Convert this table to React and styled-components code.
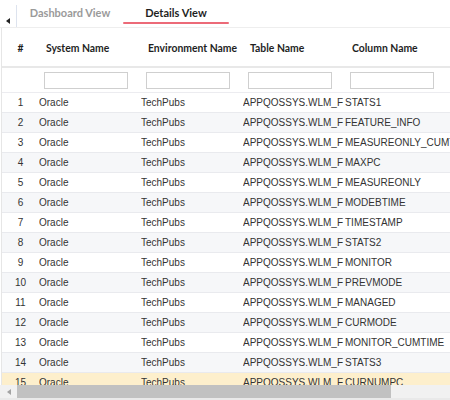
import React from 'react';
import styled, { createGlobalStyle } from 'styled-components';

const GlobalStyle = createGlobalStyle`
  html, body {
    margin: 0;
    padding: 0;
    background: #fff;
  }
`;

const Page = styled.div`
  width: 450px;
  height: 400px;
  overflow: hidden;
  display: flex;
  flex-direction: column;
  background: #fff;
`;

const TabBar = styled.div`
  height: 28px;
  display: flex;
  align-items: stretch;
  border-bottom: 1px solid #eeeeee;
  box-sizing: border-box;
  flex-shrink: 0;
`;

const Collapse = styled.div`
  width: 17px;
  display: flex;
  align-items: center;
  justify-content: center;
  padding-top: 10px;
  box-sizing: border-box;
  border-right: 1px solid #dde3ee;
  margin-top: 5px;
`;

const Tab = styled.div`
  position: relative;
  display: flex;
  align-items: center;
  justify-content: center;
  width: ${(p) => p.$width}px;
  margin-left: ${(p) => p.$ml}px;
  font-family: 'Lato', 'Liberation Sans', sans-serif;
  font-weight: 700;
  font-size: 11px;
  color: ${(p) => (p.$active ? '#1f1f1f' : '#9a9a9a')};
  padding-bottom: 3px;
  box-sizing: border-box;

  &::after {
    content: '';
    display: ${(p) => (p.$active ? 'block' : 'none')};
    position: absolute;
    left: 0;
    right: 0;
    bottom: 3px;
    height: 2px;
    background: #ec6a78;
    border-radius: 1px;
  }
`;

const TableArea = styled.div`
  flex: 1;
  overflow: hidden;
  display: flex;
  flex-direction: column;
  margin-left: 1px;
  border-left: 1px solid #e6e6e6;
`;

const cols = '37px 102px 102px 102px 160px';

const HeadRow = styled.div`
  display: grid;
  grid-template-columns: ${cols};
  height: 40px;
  align-items: center;
  border-bottom: 2px solid #e8e8e8;
  box-sizing: border-box;
  flex-shrink: 0;
`;

const HeadCell = styled.div`
  font-family: 'Lato', 'Liberation Sans', sans-serif;
  font-weight: 700;
  font-size: 10.4px;
  color: #1f1f1f;
  padding-left: ${(p) => (p.$center ? 0 : 7)}px;
  text-align: ${(p) => (p.$center ? 'center' : 'left')};
  white-space: nowrap;
  padding-top: 1px;
`;

const FilterRow = styled.div`
  display: grid;
  grid-template-columns: ${cols};
  height: 25px;
  align-items: center;
  border-bottom: 1px solid #ececf0;
  box-sizing: border-box;
  flex-shrink: 0;
`;

const FilterInput = styled.input`
  width: 84px;
  height: 17px;
  margin-left: 5px;
  border: 1px solid #cfcfcf;
  box-sizing: border-box;
  padding: 0 3px;
  font-size: 10px;
  outline: none;
`;

const Row = styled.div`
  display: grid;
  grid-template-columns: ${cols};
  height: 20px;
  align-items: center;
  border-bottom: 1px solid #e9eaee;
  box-sizing: border-box;
  flex-shrink: 0;
  background: ${(p) => (p.$highlight ? '#fdefcc' : p.$alt ? '#f6f7f9' : '#ffffff')};
`;

const Cell = styled.div`
  font-family: 'Liberation Sans', Arial, sans-serif;
  font-size: 10px;
  color: #333;
  white-space: nowrap;
  overflow: hidden;
  text-align: ${(p) => (p.$center ? 'center' : 'left')};
  padding-left: 0;
`;

const ScrollBar = styled.div`
  height: 13px;
  display: flex;
  align-items: stretch;
  background: #f1f1f1;
  flex-shrink: 0;
  border-bottom: 2px solid #e9e9e9;
`;

const ScrollArrow = styled.div`
  width: 17px;
  display: flex;
  align-items: center;
  justify-content: center;
`;

const ScrollThumb = styled.div`
  width: 374px;
  background: #c1c1c1;
`;

const columns = [
  'STATS1',
  'FEATURE_INFO',
  'MEASUREONLY_CUMTIME',
  'MAXPC',
  'MEASUREONLY',
  'MODEBTIME',
  'TIMESTAMP',
  'STATS2',
  'MONITOR',
  'PREVMODE',
  'MANAGED',
  'CURMODE',
  'MONITOR_CUMTIME',
  'STATS3',
  'CURNUMPC',
];

export default function App() {
  return (
    <Page>
      <GlobalStyle />
      <TabBar>
        <Collapse>
          <svg width="4" height="6" viewBox="0 0 4 6">
            <path d="M4 0 L0 3 L4 6 Z" fill="#222" />
          </svg>
        </Collapse>
        <Tab $width={92} $ml={7}>Dashboard View</Tab>
        <Tab $width={106} $ml={7} $active>Details View</Tab>
      </TabBar>
      <TableArea>
        <HeadRow>
          <HeadCell $center>#</HeadCell>
          <HeadCell>System Name</HeadCell>
          <HeadCell>Environment Name</HeadCell>
          <HeadCell>Table Name</HeadCell>
          <HeadCell>Column Name</HeadCell>
        </HeadRow>
        <FilterRow>
          <div />
          <FilterInput />
          <FilterInput />
          <FilterInput />
          <FilterInput />
        </FilterRow>
        {columns.map((c, i) => (
          <Row key={c} $alt={i % 2 === 1} $highlight={i === 14}>
            <Cell $center>{i + 1}</Cell>
            <Cell>Oracle</Cell>
            <Cell>TechPubs</Cell>
            <Cell>APPQOSSYS.WLM_F</Cell>
            <Cell>{c}</Cell>
          </Row>
        ))}
      </TableArea>
      <ScrollBar>
        <ScrollArrow>
          <svg width="4" height="6" viewBox="0 0 4 6">
            <path d="M4 0 L0 3 L4 6 Z" fill="#a3a3a3" />
          </svg>
        </ScrollArrow>
        <ScrollThumb />
      </ScrollBar>
    </Page>
  );
}
